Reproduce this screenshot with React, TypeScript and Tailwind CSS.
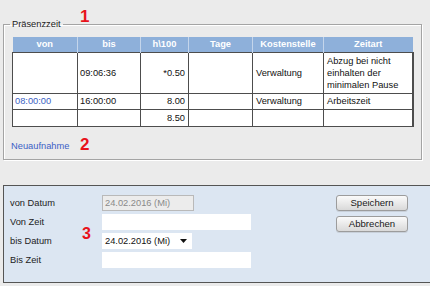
import React from "react";

const font = { fontFamily: '"Liberation Sans", Arial, sans-serif' };

export default function App() {
  return (
    <div
      className="relative w-[430px] h-[286px] overflow-hidden bg-[#ebebeb] pt-[18px] text-[9.3px] leading-[12px] text-[#111]"
      style={font}
    >
      <fieldset className="ml-[3px] w-[417px] border border-[#a4a4a4] pl-[8px] pr-[7px] pb-[6px] shadow-[inset_1px_1px_0_#ffffff,1px_1px_0_#ffffff]">
        <legend className="ml-[-2px] px-[2px] leading-[13px] text-[#222]">Präsenzzeit</legend>
        <table className="mt-[6px] w-[400px] table-fixed border-collapse">
          <colgroup>
            <col className="w-[65px]" />
            <col className="w-[63px]" />
            <col className="w-[48px]" />
            <col className="w-[64px]" />
            <col className="w-[71px]" />
            <col className="w-[89px]" />
          </colgroup>
          <thead>
            <tr className="h-[15px] bg-[#8eb0da] text-white font-bold">
              <th className="border-r border-[#c4d5eb]">von</th>
              <th className="border-r border-[#c4d5eb]">bis</th>
              <th className="border-r border-[#c4d5eb]">h\100</th>
              <th className="border-r border-[#c4d5eb]">Tage</th>
              <th className="border-r border-[#c4d5eb]">Kostenstelle</th>
              <th>Zeitart</th>
            </tr>
          </thead>
          <tbody className="bg-white">
            <tr className="h-[41px]">
              <td className="border border-[#4d4d4d] px-[3px]"></td>
              <td className="border border-[#4d4d4d] px-[2px]">09:06:36</td>
              <td className="border border-[#4d4d4d] px-[3px] text-right">*0.50</td>
              <td className="border border-[#4d4d4d] px-[3px]"></td>
              <td className="border border-[#4d4d4d] px-[3px]">Verwaltung</td>
              <td className="border border-[#4d4d4d] border-r-2 px-[3px]">
                Abzug bei nicht
                <br />
                einhalten der
                <br />
                minimalen Pause
              </td>
            </tr>
            <tr className="h-[16px]">
              <td className="border border-[#4d4d4d] px-[2px] text-[#3b63c4]">08:00:00</td>
              <td className="border border-[#4d4d4d] px-[2px]">16:00:00</td>
              <td className="border border-[#4d4d4d] px-[3px] text-right">8.00</td>
              <td className="border border-[#4d4d4d] px-[3px]"></td>
              <td className="border border-[#4d4d4d] px-[3px]">Verwaltung</td>
              <td className="border border-[#4d4d4d] border-r-2 px-[3px]">Arbeitszeit</td>
            </tr>
            <tr className="h-[17px]">
              <td className="border border-[#4d4d4d] px-[3px]"></td>
              <td className="border border-[#4d4d4d] px-[2px]"></td>
              <td className="border border-[#4d4d4d] px-[3px] text-right">8.50</td>
              <td className="border border-[#4d4d4d] px-[3px]"></td>
              <td className="border border-[#4d4d4d] px-[3px]"></td>
              <td className="border border-[#4d4d4d] border-r-2 px-[3px]"></td>
            </tr>
          </tbody>
        </table>
        <div className="mt-[13px] leading-[13px] text-[#3b5fc6] ml-[-1px]">Neuaufnahme</div>
      </fieldset>

      <div className="mt-[25px] ml-[3px] w-[440px] border border-[#555] bg-[#dce6f2] pl-[6px] pt-[9px] pb-[14px] flex">
        <div className="grid grid-cols-[92px_auto] gap-y-[3px] items-center w-[326px]">
          <div className="text-[#222]">von Datum</div>
          <div className="w-[92px] h-[16px] border border-[#b9b9b9] bg-[#ececec] text-[#8a8a8a] pl-[2px] flex items-center">
            24.02.2016 (Mi)
          </div>
          <div className="text-[#222]">Von Zeit</div>
          <div className="w-[149px] h-[16px] bg-white"></div>
          <div className="text-[#222]">bis Datum</div>
          <div className="w-[90px] h-[16px] bg-white pl-[3px] pr-[5px] flex items-center justify-between">
            <span>24.02.2016 (Mi)</span>
            <svg width="7" height="4" viewBox="0 0 7 4">
              <polygon points="0,0 7,0 3.5,4" fill="#111" />
            </svg>
          </div>
          <div className="text-[#222]">Bis Zeit</div>
          <div className="w-[149px] h-[16px] bg-white"></div>
        </div>
        <div className="flex flex-col gap-[5px]">
          <button className="w-[72px] h-[16px] rounded-[3px] border border-[#9c9c9c] bg-gradient-to-b from-[#fbfbfb] to-[#d9d9d9] text-[9.6px] leading-[14px] text-[#1a1a1a] shadow-[0_1px_0_#c8d0da]">
            Speichern
          </button>
          <button className="w-[72px] h-[16px] rounded-[3px] border border-[#9c9c9c] bg-gradient-to-b from-[#fbfbfb] to-[#d9d9d9] text-[9.6px] leading-[14px] text-[#1a1a1a] shadow-[0_1px_0_#c8d0da]">
            Abbrechen
          </button>
        </div>
      </div>

      <div className="absolute left-[80px] top-[8px] text-[17px] leading-[17px] font-bold text-[#e8121b]">1</div>
      <div className="absolute left-[80px] top-[136px] text-[17px] leading-[17px] font-bold text-[#e8121b]">2</div>
      <div className="absolute left-[82px] top-[226px] text-[16px] leading-[16px] font-bold text-[#e8121b]">3</div>
    </div>
  );
}
